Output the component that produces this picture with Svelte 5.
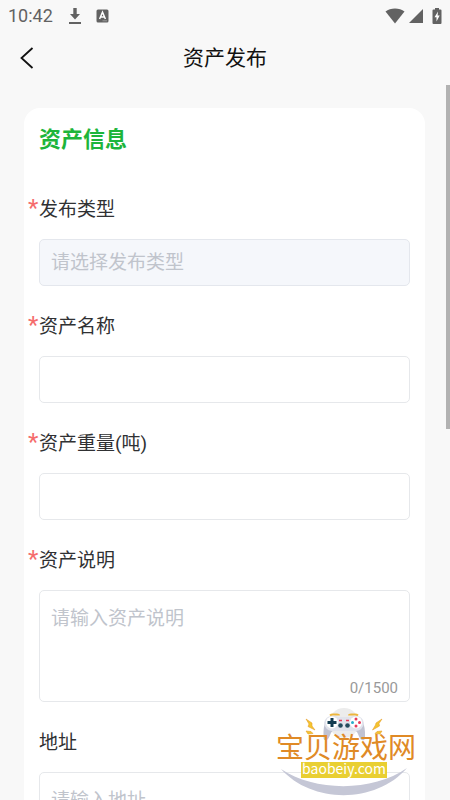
<script>
  let type = "";
  let name = "";
  let weight = "";
  let description = "";
  let address = "";

  const maxLength = 1500;

  function goBack() {
    history.back();
  }
</script>

<div class="screen">
  <div class="status">
    <span class="time">10:42</span>
    <svg width="14" height="18" viewBox="0 0 14 18">
      <path d="M5.3 1h3.4v6H12l-5 5.5L2 7h3.3z" />
      <path d="M1 15h12v2H1z" />
    </svg>
    <svg class="app" width="13" height="14" viewBox="0 0 13 14">
      <rect x="0.5" y="0.5" width="12" height="13" rx="1.5" />
      <path d="M3.6 10 6.5 3.2 9.4 10M4.6 7.9h3.8" fill="none" stroke="#fff" stroke-width="1.5" />
      <path d="M6.5 11.8h4.5" stroke="#aaa" stroke-width="0.8" />
    </svg>
    <svg class="wifi" width="20" height="16" viewBox="0 0 20 16">
      <path d="M10 15.5.5 3.6C3 1.6 6.3.5 10 .5s7 1.1 9.5 3.1z" />
    </svg>
    <svg class="signal" width="14" height="14" viewBox="0 0 14 14">
      <path d="M14 0v14H0z" />
    </svg>
    <svg width="10" height="16" viewBox="0 0 10 16">
      <path d="M3 0h4v1.6h1.5q1 0 1 1V15q0 1-1 1h-7q-1 0-1-1V2.6q0-1 1-1H3z" />
      <path d="M6 3.5 2.5 9.3h2v4.2l3.2-6H5.6z" fill="#fff" />
    </svg>
  </div>

  <header>
    <button class="back" aria-label="返回" on:click={goBack}>
      <svg width="14" height="22" viewBox="0 0 14 22">
        <path d="M12.5 1 1.5 11l11 10" fill="none" stroke="#111" stroke-width="1.8" />
      </svg>
    </button>
    <h1>资产发布</h1>
  </header>

  <main>
    <form class="card">
      <h2>资产信息</h2>

      <div class="field">
        <label for="type"><span class="star">*</span>发布类型</label>
        <select id="type" class="box" bind:value={type}>
          <option value="">请选择发布类型</option>
        </select>
      </div>

      <div class="field">
        <label for="name"><span class="star">*</span>资产名称</label>
        <input id="name" class="box" type="text" bind:value={name} />
      </div>

      <div class="field">
        <label for="weight"><span class="star">*</span>资产重量(吨)</label>
        <input id="weight" class="box" type="text" bind:value={weight} />
      </div>

      <div class="field">
        <label for="description"><span class="star">*</span>资产说明</label>
        <div class="area">
          <textarea
            id="description"
            placeholder="请输入资产说明"
            maxlength={maxLength}
            bind:value={description}
          ></textarea>
          <span class="count">{description.length}/{maxLength}</span>
        </div>
      </div>

      <div class="field">
        <label for="address"><span class="star"></span>地址</label>
        <div class="area">
          <textarea id="address" placeholder="请输入地址" bind:value={address}></textarea>
        </div>
      </div>
    </form>
  </main>

  <div class="thumb"></div>

  <svg class="mark" width="150" height="100" viewBox="0 0 150 100">
    <circle cx="74" cy="23" r="15" fill="#ececec" />
    <path d="M11 69C45 92 103 92 137 68 106 104 42 104 11 69z" fill="#c5c7d6" />
    <!-- gamepad -->
    <path d="M60 15.5q1-1 3-1h4q2 0 2 1M79 15.5q0-1 2-1h4q2 0 3 1" fill="none" stroke="#edb63c" stroke-width="1.8" />
    <path d="M56 20q-3 7-2.500 17 0 4 3 3 2-.5 4-6 1.500-4 5-4h17q4 0 5.500 4 2 5.500 4 6 3 1 3-3 .5-10-3-17z" fill="#c0c3d2" />
    <path d="M61 16q4-1 7 1h12q3-2 7-1 6 1 7 7-1 7-8 8H62q-7-1-8-8 1-6 7-7z" fill="#e1e3ec" />
    <circle cx="62" cy="22.5" r="6" fill="#fff" />
    <circle cx="86" cy="22.5" r="6" fill="#fff" />
    <path d="M62 18v9M57.5 22.5h9" stroke="#123b50" stroke-width="3" />
    <circle cx="86" cy="19" r="1.5" fill="#e63b59" />
    <circle cx="86" cy="26" r="1.5" fill="#e63b59" />
    <circle cx="82.5" cy="22.5" r="1.5" fill="#28aeca" />
    <circle cx="89.5" cy="22.5" r="1.5" fill="#e63b59" />
    <path d="M69 20.5h3M76 20.500h3" stroke="#e63b59" stroke-width="1.500" />
    <circle cx="70.5" cy="25.5" r="2.3" fill="#244b5d" />
    <circle cx="77.5" cy="25.5" r="2.3" fill="#244b5d" />
    <!-- sparks -->
    <path d="m36 19 6 4v3l3 4-7-3.5 1-2.5zM36 31l5 .5 2 2-5 .5zM112 19l-6 4-.5 2-3 5 7-4-.5-2.5zM112 31l-5 .5-2 2 5 .5z" fill="#f4c52e" stroke="#e7a02e" stroke-width="0.6" />
    <rect x="31" y="62" width="86" height="16" fill="#e9cf32" />
    <text x="6" y="58" class="mark-name">宝贝游戏网</text>
    <text x="74" y="74" text-anchor="middle" class="mark-url">baobeiy.com</text>
  </svg>
</div>

<style>
  :global(body) {
    background: #f8f8f8;
  }

  .screen {
    position: relative;
    height: 100vh;
    overflow: hidden;
    background: #f8f8f8;
    color: #303133;
    font-family: Roboto, "Noto Sans CJK SC", sans-serif;
  }

  .status {
    display: flex;
    align-items: center;
    height: 32px;
    padding: 0 8px;
    box-sizing: border-box;
    color: #626262;
    fill: #626262;
  }

  .time {
    margin-right: 15px;
    font-size: 18px;
    line-height: 30px;
  }

  .app {
    margin-left: 14px;
  }

  .wifi {
    margin-left: auto;
  }

  .signal {
    margin: 0 9px 0 4px;
  }

  header {
    display: grid;
    grid-template-columns: 1fr auto 1fr;
    align-items: center;
    height: 52px;
    padding: 0 20px;
  }

  .back {
    display: flex;
    justify-self: start;
    padding: 0;
    border: none;
    background: none;
    cursor: pointer;
  }

  h1 {
    margin: 0;
    color: #111;
    font-size: 21px;
    font-weight: 400;
    line-height: 32px;
  }

  main {
    padding: 24px 25px 24px 24px;
  }

  .card {
    padding: 16px 15px;
    border-radius: 16px;
    background: #fff;
  }

  h2 {
    margin: 0 0 39px;
    color: #1db53a;
    font-size: 22px;
    font-weight: 700;
    line-height: 32px;
  }

  .field {
    margin-bottom: 26px;
  }

  label {
    display: flex;
    height: 30px;
    margin: 0 0 14px -11px;
    font-size: 19px;
    line-height: 30px;
  }

  .star {
    width: 11px;
    color: #f56c6c;
    font-size: 24px;
    line-height: 26px;
  }

  .box,
  .area {
    display: block;
    width: 100%;
    box-sizing: border-box;
    border: 1px solid #e6e8eb;
    border-radius: 5px;
    background: #fff;
  }

  .box {
    height: 47px;
    padding: 0 11px;
    color: #303133;
    font-family: inherit;
    font-size: 19px;
    outline: none;
  }

  select.box {
    appearance: none;
    border-color: #e4e7ed;
    background: #f5f7fb;
    color: #c0c4cc;
  }

  .area {
    display: flex;
    flex-direction: column;
    height: 112px;
    padding: 15px 11px 2px;
  }

  textarea {
    flex: 1;
    padding: 0;
    border: none;
    background: none;
    color: #303133;
    font-family: inherit;
    font-size: 19px;
    line-height: 26px;
    resize: none;
    outline: none;
  }

  ::placeholder {
    color: #c0c4cc;
    opacity: 1;
  }

  .count {
    align-self: flex-end;
    color: #999;
    font-size: 15px;
    line-height: 22px;
  }

  .thumb {
    position: absolute;
    top: 85px;
    right: 0;
    width: 4px;
    height: 43%;
    background: #b2b2b2;
  }

  .mark {
    position: absolute;
    right: 30px;
    bottom: 0;
    pointer-events: none;
  }

  .mark-name {
    fill: #e08a26;
    font-family: "Noto Sans CJK SC", sans-serif;
    font-size: 28px;
  }

  .mark-url {
    fill: #fff;
    font-family: "Noto Sans CJK SC", sans-serif;
    font-size: 14px;
  }
</style>
